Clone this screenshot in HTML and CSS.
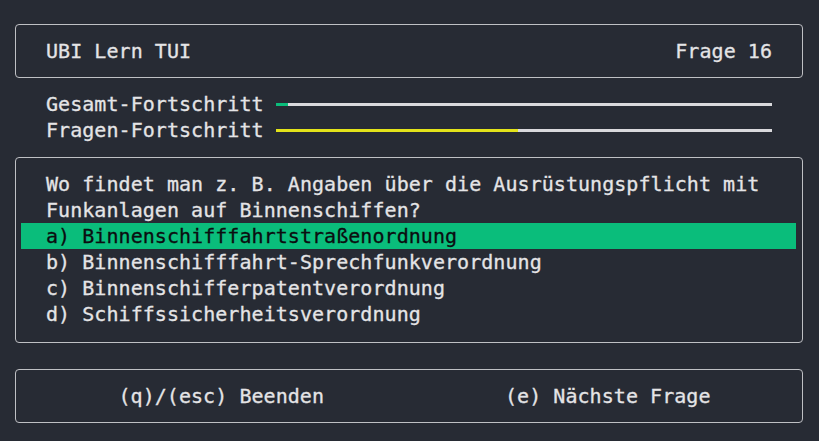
FILE: index.html
```html
<!DOCTYPE html>
<html lang="de">
<head>
<meta charset="utf-8">
<title>UBI Lern TUI</title>
<link rel="stylesheet" href="styles.css">
</head>
<body>
<div class="app">
  <header class="box header">
    <span>UBI Lern TUI</span>
    <span>Frage 16</span>
  </header>

  <section class="progress">
    <div class="prow">
      <span class="plabel">Gesamt-Fortschritt</span>
      <div class="bar"><div class="fill fill-green" style="width: 12px"></div></div>
    </div>
    <div class="prow">
      <span class="plabel">Fragen-Fortschritt</span>
      <div class="bar"><div class="fill fill-yellow" style="width: 48.8%"></div></div>
    </div>
  </section>

  <section class="box question">
    <div class="qline">Wo findet man z. B. Angaben über die Ausrüstungspflicht mit</div>
    <div class="qline">Funkanlagen auf Binnenschiffen?</div>
    <div class="option selected">a) Binnenschifffahrtstraßenordnung</div>
    <div class="option">b) Binnenschifffahrt-Sprechfunkverordnung</div>
    <div class="option">c) Binnenschifferpatentverordnung</div>
    <div class="option">d) Schiffssicherheitsverordnung</div>
  </section>

  <footer class="box footer">
    <span class="key">(q)/(esc) Beenden</span>
    <span class="key">(e) Nächste Frage</span>
  </footer>
</div>
</body>
</html>
```

FILE: styles.css
```css
html, body {
  margin: 0;
  padding: 0;
  background: #272b34;
}

body {
  font-family: "DejaVu Sans Mono", "Liberation Mono", monospace;
  font-size: 20px;
  letter-spacing: 0.05px;
  color: #e4e4e6;
  -webkit-text-stroke: 0.3px currentColor;
  width: 819px;
  height: 441px;
  overflow: hidden;
}

.app {
  padding: 24px 16px 0 15px;
  display: flex;
  flex-direction: column;
}

.box {
  border: 1px solid #bfc0c4;
  border-radius: 4px;
  box-sizing: border-box;
}

.header {
  height: 54px;
  display: flex;
  justify-content: space-between;
  align-items: center;
  padding: 0 30px 0 30px;
  line-height: 26px;
}

.progress {
  margin-top: 13px;
  padding: 0 31px 0 31px;
  display: flex;
  flex-direction: column;
}

.prow {
  height: 26px;
  display: flex;
  align-items: center;
  line-height: 26px;
}

.plabel {
  width: 230px;
  flex: none;
  white-space: pre;
}

.bar {
  flex: 1;
  height: 3px;
  background: #d9d9dc;
  display: flex;
}

.fill {
  height: 100%;
}

.fill-green { background: #0bbd7b; }
.fill-yellow { background: #e3e31a; }

.question {
  margin-top: 14px;
  height: 186px;
  padding: 13px 6px 15px 5px;
  display: flex;
  flex-direction: column;
}

.qline, .option {
  height: 26px;
  line-height: 26px;
  white-space: pre;
}

.qline {
  padding-left: 25px;
}

.option {
  padding-left: 25px;
}

.option.selected {
  background: #0abd7b;
  color: #0b0d10;
}

.footer {
  margin-top: 26px;
  height: 54px;
  display: flex;
  align-items: center;
  padding: 0 1px 0 12px;
  line-height: 26px;
}

.key {
  flex: 1;
  text-align: center;
  white-space: pre;
}
```
